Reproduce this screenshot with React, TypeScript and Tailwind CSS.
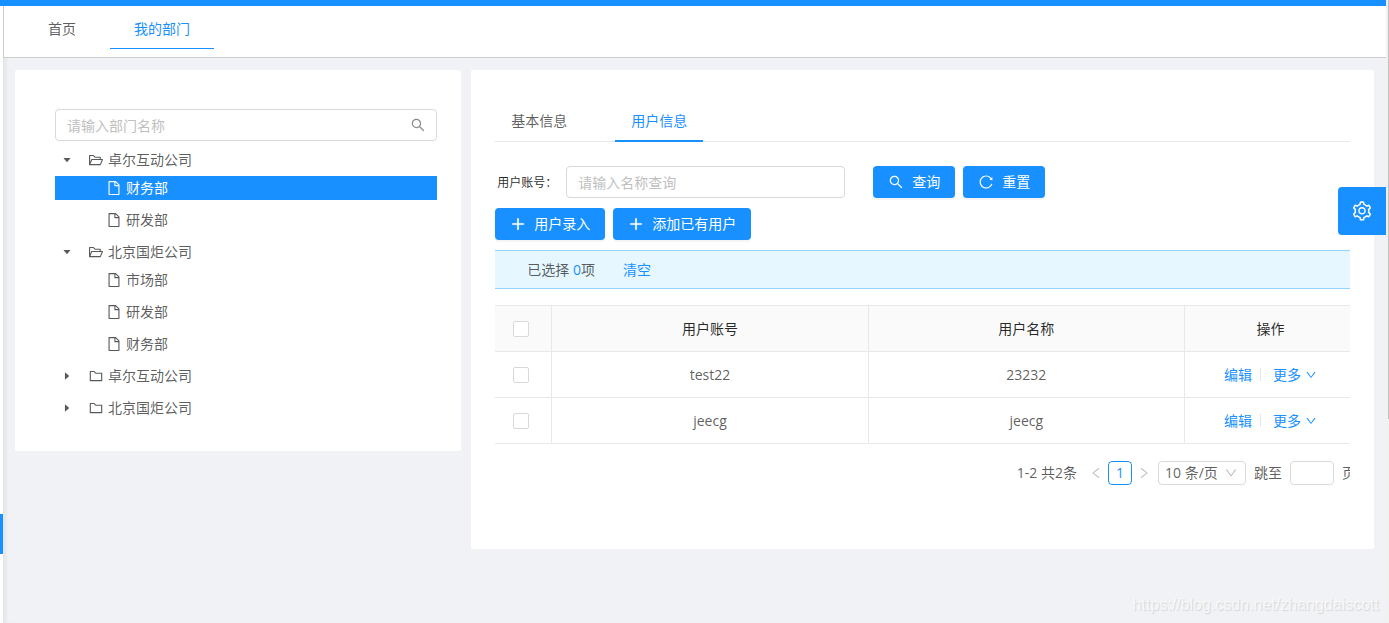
import { useState } from "react";
import type { ReactNode } from "react";
import {
  AiOutlineDown,
  AiOutlineFile,
  AiOutlineFolder,
  AiOutlineFolderOpen,
  AiOutlineLeft,
  AiOutlinePlus,
  AiOutlineReload,
  AiOutlineRight,
  AiOutlineSearch,
  AiOutlineSetting,
  AiFillCaretDown,
  AiFillCaretRight,
} from "react-icons/ai";

type Department = { id: string; name: string; open: boolean; children: { id: string; name: string }[] };

const departments: Department[] = [
  {
    id: "a",
    name: "卓尔互动公司",
    open: true,
    children: [
      { id: "a1", name: "财务部" },
      { id: "a2", name: "研发部" },
    ],
  },
  {
    id: "b",
    name: "北京国炬公司",
    open: true,
    children: [
      { id: "b1", name: "市场部" },
      { id: "b2", name: "研发部" },
      { id: "b3", name: "财务部" },
    ],
  },
  { id: "c", name: "卓尔互动公司", open: false, children: [] },
  { id: "d", name: "北京国炬公司", open: false, children: [] },
];

const users = [
  { account: "test22", name: "23232" },
  { account: "jeecg", name: "jeecg" },
];

function PrimaryButton({ icon, children }: { icon: ReactNode; children: ReactNode }) {
  return (
    <button
      type="button"
      className="flex h-8 items-center gap-2 rounded bg-[#1890ff] px-[15px] text-white shadow-[0_2px_0_rgba(0,0,0,0.04)]"
    >
      {icon}
      <span>{children}</span>
    </button>
  );
}

function TopTabs() {
  return (
    <header className="relative border-t-6 border-t-[#1890ff] bg-white">
      <nav className="flex gap-[10px] border-b border-l border-[#ccc] pb-2 pl-5">
        <a href="#home" className="flex h-[43px] items-center border-b border-transparent px-6 pt-1">
          首页
        </a>
        <a
          href="#department"
          className="flex h-[43px] items-center border-b border-[#1890ff] px-6 pt-1 text-[#1890ff]"
        >
          我的部门
        </a>
      </nav>
    </header>
  );
}

function DepartmentTree() {
  const [selected, setSelected] = useState("a1");
  const [open, setOpen] = useState(departments.filter((d) => d.open).map((d) => d.id));
  const toggle = (id: string) =>
    setOpen((prev) => (prev.includes(id) ? prev.filter((x) => x !== id) : [...prev, id]));

  return (
    <ul className="mt-[7px] flex flex-col gap-2">
      {departments.map((dept) => {
        const expanded = open.includes(dept.id);
        return (
          <li key={dept.id}>
            <button type="button" onClick={() => toggle(dept.id)} className="flex h-6 w-full items-center">
              <span className="flex w-6 justify-center text-[10px]">
                {expanded ? <AiFillCaretDown /> : <AiFillCaretRight />}
              </span>
              <span className="flex items-center gap-1 pl-[9px]">
                {expanded ? <AiOutlineFolderOpen className="size-4" /> : <AiOutlineFolder className="size-4" />}
                <span>{dept.name}</span>
              </span>
            </button>
            {expanded && dept.children.length > 0 && (
              <ul className="mt-1 flex flex-col gap-2">
                {dept.children.map((child) => (
                  <li key={child.id}>
                    <button
                      type="button"
                      onClick={() => setSelected(child.id)}
                      className={
                        selected === child.id
                          ? "flex h-6 w-full items-center gap-1 bg-[#1890ff] pl-[51px] text-white"
                          : "flex h-6 w-full items-center gap-1 pl-[51px]"
                      }
                    >
                      <AiOutlineFile className="size-4" />
                      <span>{child.name}</span>
                    </button>
                  </li>
                ))}
              </ul>
            )}
          </li>
        );
      })}
    </ul>
  );
}

function UserTable() {
  const box = "block size-4 appearance-none rounded-xs border border-[#d9d9d9] bg-white checked:bg-[#1890ff]";
  const cell = "border-b border-[#e8e8e8] text-center font-normal";
  return (
    <table className="w-full table-fixed border-separate border-spacing-0 border-t border-[#e8e8e8]">
      <colgroup>
        <col className="w-[57px]" />
        <col />
        <col />
        <col className="w-[171px]" />
      </colgroup>
      <thead className="bg-[#fafafa] text-black/85">
        <tr className="h-[46px]">
          <th className={`${cell} border-r pl-[18px]`}>
            <input type="checkbox" aria-label="全选" className={box} />
          </th>
          <th className={`${cell} border-r`}>用户账号</th>
          <th className={`${cell} border-r`}>用户名称</th>
          <th className={cell}>操作</th>
        </tr>
      </thead>
      <tbody>
        {users.map((user) => (
          <tr key={user.account} className="h-[46px]">
            <td className={`${cell} border-r pl-[18px]`}>
              <input type="checkbox" aria-label={user.account} className={box} />
            </td>
            <td className={`${cell} border-r`}>{user.account}</td>
            <td className={`${cell} border-r`}>{user.name}</td>
            <td className={cell}>
              <div className="flex items-center justify-center text-[#1890ff]">
                <a href="#edit">编辑</a>
                <span className="mr-3 ml-2 h-[13px] w-px bg-[#e8e8e8]" />
                <a href="#more" className="flex items-center gap-1">
                  更多
                  <AiOutlineDown className="size-3" />
                </a>
              </div>
            </td>
          </tr>
        ))}
      </tbody>
    </table>
  );
}

function Pagination() {
  return (
    <div className="mt-[17px] flex h-6 items-center justify-end whitespace-nowrap">
      <span className="mr-3">1-2 共2条</span>
      <button type="button" aria-label="上一页" className="text-black/25">
        <AiOutlineLeft className="size-[14px]" />
      </button>
      <button type="button" className="mx-[5px] size-6 rounded border border-[#1890ff] text-[#1890ff]">
        1
      </button>
      <button type="button" aria-label="下一页" className="text-black/25">
        <AiOutlineRight className="size-[14px]" />
      </button>
      <div className="relative mr-2 ml-[7px]">
        <select
          aria-label="每页条数"
          className="block h-6 w-22 appearance-none rounded border border-[#d9d9d9] bg-white pl-[6px] leading-5"
        >
          <option>10 条/页</option>
          <option>20 条/页</option>
        </select>
        <AiOutlineDown className="pointer-events-none absolute top-[5px] right-2 size-[14px] text-black/25" />
      </div>
      <label htmlFor="jump">跳至</label>
      <input id="jump" className="mx-2 h-6 w-11 rounded border border-[#d9d9d9] px-1" />
      <span>页</span>
    </div>
  );
}

export default function App() {
  return (
    <div className="flex min-h-screen bg-white font-['Open_Sans','Noto_Sans_CJK_SC',sans-serif] text-sm text-black/65">
      <aside className="relative w-[3px] shrink-0 border-t-6 border-[#1890ff] bg-white">
        <div className="absolute top-[508px] h-10 w-full bg-[#1890ff]" />
      </aside>

      <div className="relative flex min-w-0 flex-1 flex-col bg-[#f0f2f5] shadow-[inset_5px_0_5px_-3px_rgba(0,21,41,0.08)]">
        <TopTabs />

        <main className="flex items-start px-[7px] pt-3">
          <div className="w-1/3 px-[5px]">
            <section className="rounded-xs bg-white pt-[39px] pr-6 pb-[31px] pl-10">
              <div className="relative">
                <input
                  aria-label="部门名称"
                  placeholder="请输入部门名称"
                  className="block h-8 w-full rounded border border-[#d9d9d9] bg-white pr-8 pl-[11px] placeholder:text-[#bfbfbf]"
                />
                <AiOutlineSearch className="absolute top-2 right-[11px] size-4 text-black/45" />
              </div>
              <DepartmentTree />
            </section>
          </div>

          <div className="w-2/3 px-[5px]">
            <section className="rounded-xs bg-white px-6 pt-[31px] pb-16">
              <nav className="flex gap-8 border-b border-[#e8e8e8]">
                <a href="#basic" className="-mb-px flex h-[41px] items-center border-b-2 border-transparent px-4">
                  基本信息
                </a>
                <a
                  href="#users"
                  className="-mb-px flex h-[41px] items-center border-b-2 border-[#1890ff] px-4 text-[#1890ff]"
                >
                  用户信息
                </a>
              </nav>

              <form className="mt-6 flex items-center">
                <label htmlFor="account" className="w-[71px] pt-px pl-[2px] text-xs whitespace-nowrap text-black/85">
                  用户账号：
                </label>
                <input
                  id="account"
                  placeholder="请输入名称查询"
                  className="mr-7 h-8 w-[279px] rounded border border-[#d9d9d9] px-[11px] placeholder:text-[#bfbfbf]"
                />
                <div className="flex gap-2">
                  <PrimaryButton icon={<AiOutlineSearch className="size-4" />}>查询</PrimaryButton>
                  <PrimaryButton icon={<AiOutlineReload className="size-4" />}>重置</PrimaryButton>
                </div>
              </form>

              <div className="mt-[10px] flex gap-2">
                <PrimaryButton icon={<AiOutlinePlus className="size-4 stroke-white stroke-[36]" />}>
                  用户录入
                </PrimaryButton>
                <PrimaryButton icon={<AiOutlinePlus className="size-4 stroke-white stroke-[36]" />}>
                  添加已有用户
                </PrimaryButton>
              </div>

              <div className="mt-[10px] mb-4 flex h-[39px] items-center gap-7 border-y border-[#91d5ff] bg-[#e6f7ff] pl-8">
                <span>
                  已选择 <span className="text-[#1890ff]">0</span>项
                </span>
                <a href="#clear" className="text-[#1890ff]">
                  清空
                </a>
              </div>

              <div className="overflow-hidden">
                <div className="w-[calc(100%+6px)]">
                  <UserTable />
                  <Pagination />
                </div>
              </div>
            </section>
          </div>
        </main>

        <button
          type="button"
          aria-label="设置"
          className="absolute top-[187px] right-0 flex size-12 items-center justify-center rounded-l bg-[#1890ff] text-white"
        >
          <AiOutlineSetting className="size-[22px]" />
        </button>
        <p className="absolute right-[7px] bottom-[6px] font-['Liberation_Sans',sans-serif] text-base text-white/70 [text-shadow:1px_1px_1px_rgba(0,0,0,0.12)]">
          https://blog.csdn.net/zhangdaiscott
        </p>
      </div>

      <div className="relative w-[3px] shrink-0 bg-[#f1f1f1]">
        <div className="absolute top-0 right-0 h-[419px] w-px bg-[#c1c1c1]" />
      </div>
    </div>
  );
}
